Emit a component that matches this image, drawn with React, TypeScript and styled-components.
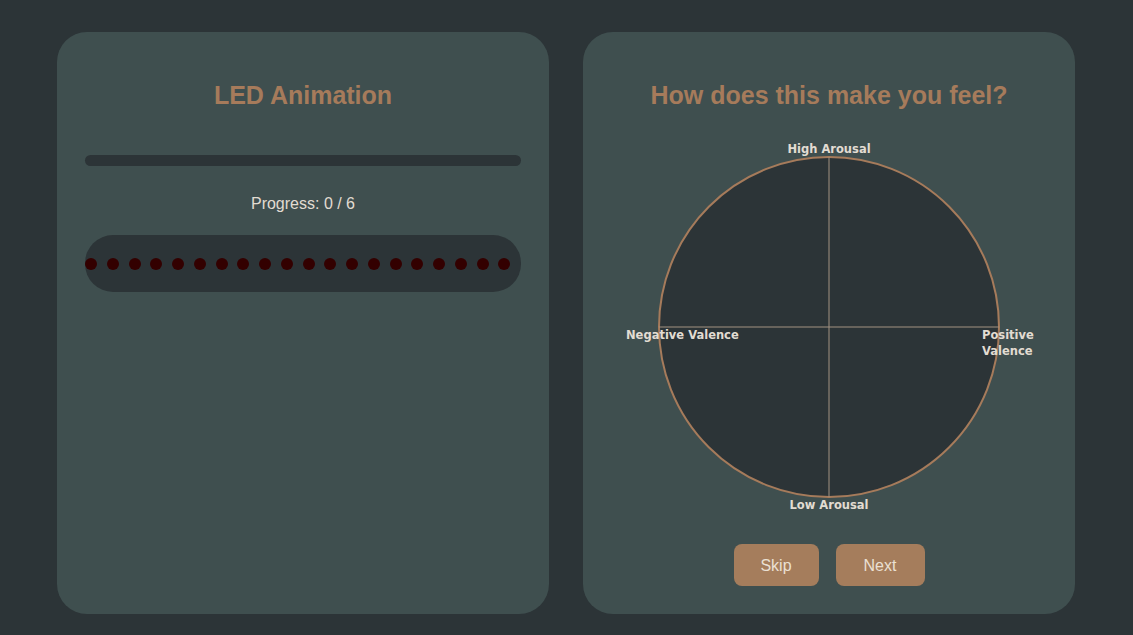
import React from "react";
import styled, { createGlobalStyle } from "styled-components";

const GlobalStyle = createGlobalStyle`
    body {
        margin: 0;
        background: #2c3437;
        font-family: "Liberation Sans", Arial, sans-serif;
    }
`;

const Page = styled.div`
    display: flex;
    gap: 34px;
    padding: 32px 58px 21px 57px;
`;

const Card = styled.div`
    width: 492px;
    height: 582px;
    box-sizing: border-box;
    background: #3f4f4f;
    border-radius: 30px;
    padding: 48px 28px 0;
    display: flex;
    flex-direction: column;
    align-items: center;
`;

const Title = styled.h2`
    margin: 0;
    font-size: 25px;
    line-height: 30px;
    font-weight: bold;
    color: #a67b5b;
    text-align: center;
`;

const Track = styled.div`
    margin-top: 45px;
    width: 100%;
    height: 11px;
    border-radius: 6px;
    background: #2c3437;
`;

const ProgressText = styled.div`
    margin-top: 29px;
    font-size: 16px;
    line-height: 18px;
    color: #e2dcd2;
`;

const Strip = styled.div`
    margin-top: 22px;
    width: 100%;
    height: 57px;
    border-radius: 28px;
    background: #2c3437;
    display: flex;
    align-items: center;
    gap: 9.75px;
`;

const Led = styled.span<{ $on?: boolean }>`
    flex: none;
    width: 12px;
    height: 12px;
    border-radius: 50%;
    background: ${p => (p.$on ? "#ff2a2a" : "#330000")};
`;

const Wheel = styled.div`
    position: relative;
    width: 342px;
    height: 342px;
    margin-top: 46px;
`;

const Label = styled.span<{ $left?: number; $top: number; $center?: boolean }>`
    position: absolute;
    top: ${p => p.$top}px;
    left: ${p => (p.$center ? "50%" : `${p.$left}px`)};
    transform: ${p => (p.$center ? "translateX(-50%)" : "none")};
    font-family: "DejaVu Sans", Verdana, sans-serif;
    font-weight: bold;
    font-size: 11.5px;
    line-height: 16px;
    color: #e2dcd2;
    white-space: nowrap;
`;

const Buttons = styled.div`
    margin-top: 46px;
    display: flex;
    gap: 17px;
`;

const Button = styled.button<{ $w: number }>`
    width: ${p => p.$w}px;
    height: 42px;
    padding: 2px 0 0;
    border: none;
    border-radius: 8px;
    background: #a57d5c;
    color: #ebe0d3;
    font-family: "Liberation Sans", Arial, sans-serif;
    font-size: 16px;
    cursor: pointer;
`;

const App: React.FunctionComponent = () => {
    const leds = Array.from({ length: 20 });

    return (
        <>
            <GlobalStyle />
            <Page>
                <Card>
                    <Title>LED Animation</Title>
                    <Track />
                    <ProgressText>Progress: 0 / 6</ProgressText>
                    <Strip>
                        {leds.map((_, i) => (
                            <Led key={i} />
                        ))}
                    </Strip>
                </Card>
                <Card>
                    <Title>How does this make you feel?</Title>
                    <Wheel>
                        <svg width="342" height="342" viewBox="0 0 342 342">
                            <circle cx="171" cy="171" r="170" fill="#2c3437" stroke="#a67b5b" strokeWidth="2" />
                            <line x1="171" y1="1" x2="171" y2="341" stroke="#a29282" strokeWidth="1" />
                            <line x1="1" y1="171" x2="341" y2="171" stroke="#a29282" strokeWidth="1" />
                        </svg>
                        <Label $center $top={-15}>High Arousal</Label>
                        <Label $center $top={341}>Low Arousal</Label>
                        <Label $left={-32} $top={171}>Negative Valence</Label>
                        <Label $left={324} $top={171}>Positive<br />Valence</Label>
                    </Wheel>
                    <Buttons>
                        <Button $w={85}>Skip</Button>
                        <Button $w={89}>Next</Button>
                    </Buttons>
                </Card>
            </Page>
        </>
    );
};

export default App;
